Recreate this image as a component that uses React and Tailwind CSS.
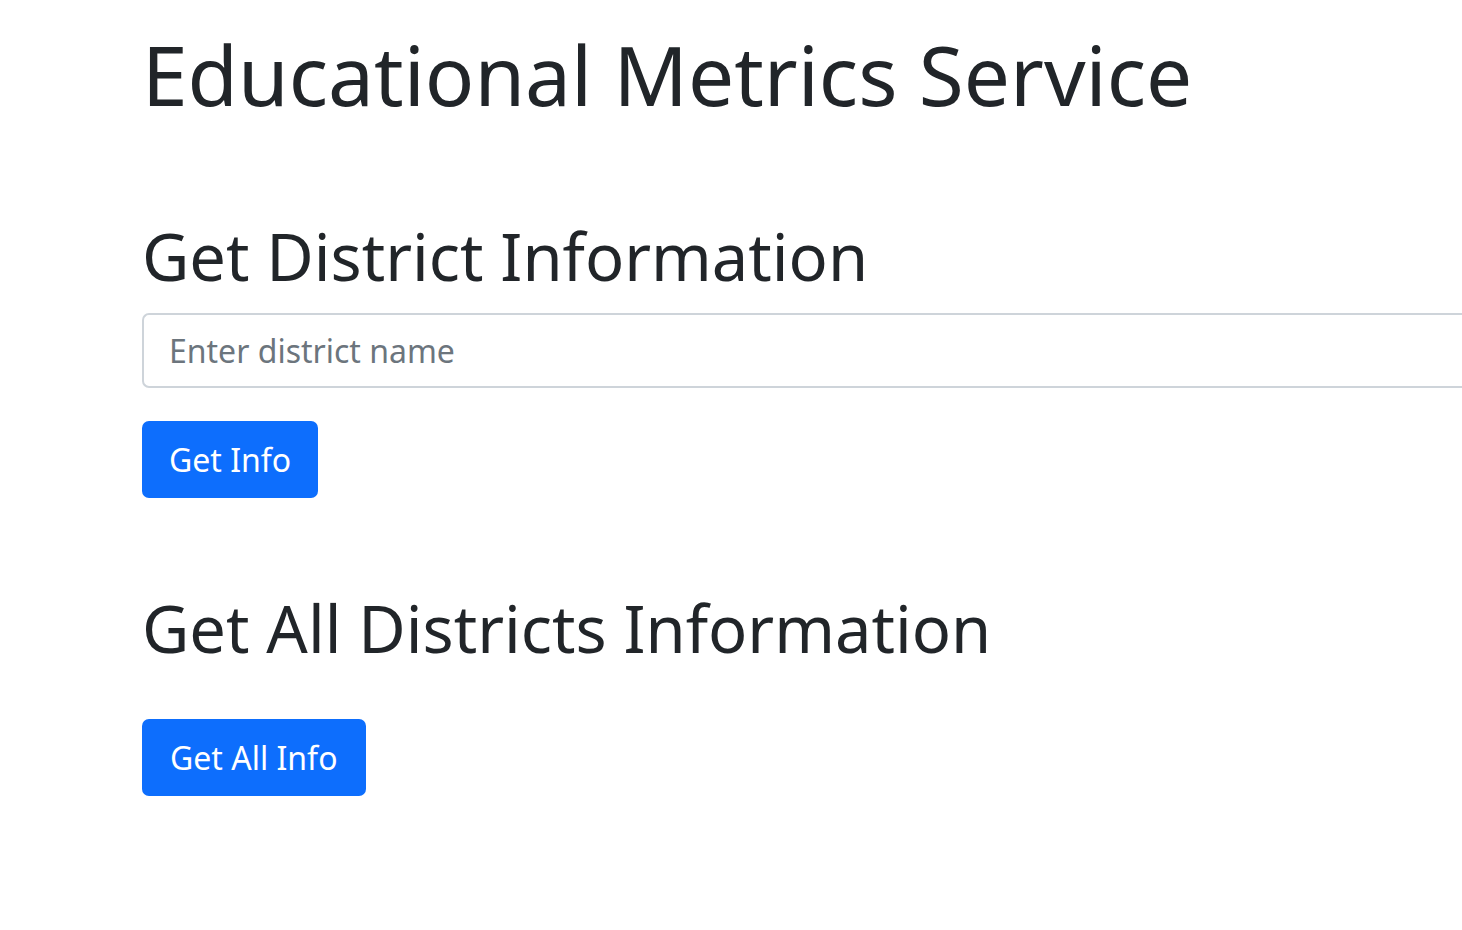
export default function App() {
  return (
    <div className="min-h-[930px] bg-white text-[#212529]" style={{ fontFamily: '"Noto Sans", sans-serif' }}>
      <div className="pl-[142px] pt-[25px]">
        <h1 className="text-[82px] leading-[1.2] font-normal">Educational Metrics Service</h1>
        <h2 className="mt-[94px] text-[65px] leading-[1.2] font-normal">Get District Information</h2>
        <input
          type="text"
          placeholder="Enter district name"
          className="mt-[18px] block w-[1340px] h-[75px] rounded-l-[7px] border-2 border-r-0 border-[#ced4da] px-[25px] text-[32px] placeholder:text-[#6c757d] outline-none"
        />
        <button className="mt-[33px] block h-[77px] px-[27px] rounded-[7px] bg-[#0d6efd] text-white text-[32px]">Get Info</button>
        <h2 className="mt-[91px] text-[65px] leading-[1.2] font-normal">Get All Districts Information</h2>
        <button className="mt-[52px] block h-[77px] px-[28px] rounded-[7px] bg-[#0d6efd] text-white text-[32px]">Get All Info</button>
      </div>
    </div>
  );
}
